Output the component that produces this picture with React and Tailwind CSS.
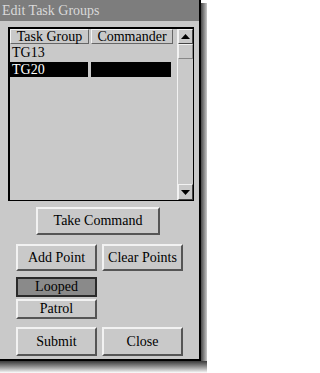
const raised =
  "border-2 border-t-[#f2f2f2] border-l-[#f2f2f2] border-r-[#555] border-b-[#555] bg-[#c9c9c9]";

const Arrow = ({ down }) => (
  <svg width="9" height="5" viewBox="0 0 9 5">
    {down ? <polygon points="0,0 9,0 4.5,5" fill="#000" /> : <polygon points="0,5 9,5 4.5,0" fill="#000" />}
  </svg>
);

const Button = ({ children, className }) => (
  <div className={`${raised} flex items-center justify-center text-[14px] leading-none text-black ${className}`}>
    {children}
  </div>
);

const App = () => {
  return (
    <div className="w-[207px] h-[373px] bg-white flex flex-col font-['Liberation_Serif','DejaVu_Serif',serif]">
      <div className="flex h-[361px]">
        <div className="w-[201px] h-[361px] border-r-2 border-b-2 border-black bg-[#c9c9c9] flex flex-col">
          {/* title */}
          <div className="h-[21px] bg-[#7d7d7d] text-[#d9d9d9] text-[14px] leading-[21px] pl-[2px]">
            Edit Task Groups
          </div>

          {/* list */}
          <div className="mt-[6px] ml-[8px] w-[186px] h-[174px] border-t-2 border-l-2 border-r border-b border-black flex">
            <div className="flex flex-col w-[165px]">
              <div className="flex h-[15px] gap-[2px]">
                <div className="w-[79px] border border-t-[#f2f2f2] border-l-[#f2f2f2] border-r-[#666] border-b-[#666] text-[14px] leading-[13px] text-center">
                  Task Group
                </div>
                <div className="w-[82px] border border-t-[#f2f2f2] border-l-[#f2f2f2] border-r-[#666] border-b-[#666] text-[14px] leading-[13px] text-center">
                  Commander
                </div>
              </div>
              <div className="flex h-[17px] items-center text-[14px] pl-[2px]">TG13</div>
              <div className="flex h-[15px] gap-[3px] mt-[1px]">
                <div className="w-[78px] bg-black text-white text-[14px] leading-[15px] pl-[2px]">TG20</div>
                <div className="w-[80px] bg-black" />
              </div>
            </div>
            <div className="ml-[3px] w-[16px] flex flex-col border-l border-[#f2f2f2]">
              <div className="h-[15px] border border-t-[#f2f2f2] border-l-[#f2f2f2] border-r-[#444] border-b-[#444] flex items-center justify-center">
                <Arrow />
              </div>
              <div className="h-[15px] border border-t-[#f2f2f2] border-l-[#f2f2f2] border-r-[#888] border-b-[#888]" />
              <div className="flex-1" />
              <div className="h-[16px] border border-t-[#f2f2f2] border-l-[#f2f2f2] border-r-[#444] border-b-[#444] flex items-center justify-center">
                <Arrow down />
              </div>
            </div>
          </div>

          <Button className="mt-[6px] ml-[36px] w-[124px] h-[28px]">Take Command</Button>

          <div className="flex gap-[5px] mt-[9px] ml-[16px]">
            <Button className="w-[81px] h-[27px]">Add Point</Button>
            <Button className="w-[81px] h-[27px]">Clear Points</Button>
          </div>

          <div className="mt-[6px] ml-[16px] w-[81px] h-[20px] border-2 border-[#2a2a2a] bg-[#8a8a8a] flex items-center justify-center text-[14px] leading-none">
            Looped
          </div>
          <Button className="mt-[2px] ml-[16px] w-[81px] h-[20px]">Patrol</Button>

          <div className="flex gap-[5px] mt-[8px] ml-[16px]">
            <Button className="w-[81px] h-[29px]">Submit</Button>
            <Button className="w-[81px] h-[29px]">Close</Button>
          </div>
        </div>
        <div className="w-[6px] mt-[3px] bg-linear-to-r from-[#4a4a4a] to-[#c8c8c8]" />
      </div>
      <div className="h-[12px] bg-linear-to-b from-[#3a3a3a] to-white" />
    </div>
  );
};

export default App;
